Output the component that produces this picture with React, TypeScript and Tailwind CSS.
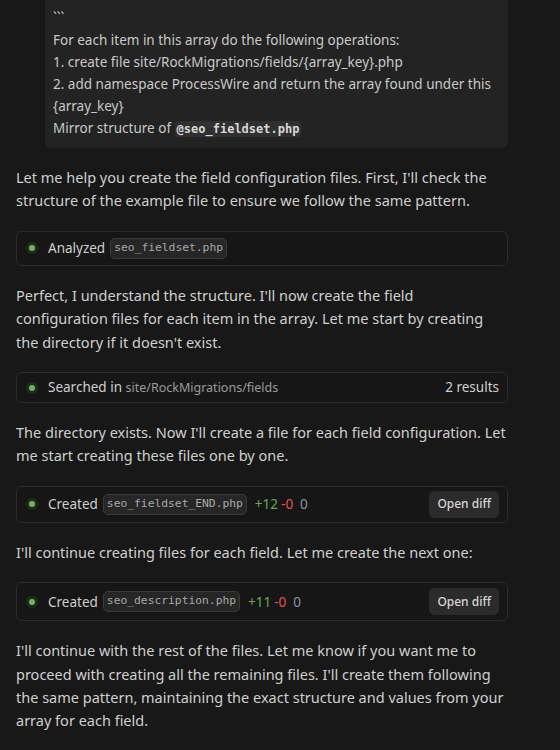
import React from "react";

const Dot = () => (
  <span className="flex h-[12px] w-[12px] shrink-0 items-center justify-center rounded-full bg-[#1f2a1f]">
    <span className="h-[6px] w-[6px] rounded-full bg-[#6fb45a]" />
  </span>
);

const Chip = ({ children }: { children: React.ReactNode }) => (
  <span className="inline-flex h-[21px] items-center rounded-[5px] border border-[#3a3a3a] bg-[#262626] px-[3px] font-['DejaVu_Sans_Mono',monospace] text-[11.3px] text-[#a8a8a8]">
    {children}
  </span>
);

const OpenDiff = () => (
  <button className="ml-auto flex h-[27px] items-center rounded-[5px] bg-[#2b2b2b] px-2 text-[12px] font-medium text-[#d6d6d6]">
    Open diff
  </button>
);

const Stats = ({ plus }: { plus: string }) => (
  <>
    <span className="ml-[3px] text-[#6aa84f]">{plus}</span>
    <span className="-ml-[2px] text-[#e5534b]">-0</span>
    <span className="ml-[2px] text-[#8a94a6]">0</span>
  </>
);

export default function App() {
  return (
    <div className="h-[750px] w-[560px] overflow-hidden bg-[#181818] font-['Noto_Sans',sans-serif] text-[#cfcfcf]">
      <div className="flex w-[508px] flex-col gap-[18px] pl-4">
        <div className="ml-[29px] -mt-px rounded-b-md bg-[#232323] px-2 pb-2 pt-2 text-[13.5px] leading-[22px] text-[#c9c9c9]">
          <div>```</div>
          <div>For each item in this array do the following operations:</div>
          <div>1. create file site/RockMigrations/fields/{"{array_key}"}.php</div>
          <div>
            2. add namespace ProcessWire and return the array found under this {"{array_key}"}
          </div>
          <div>
            Mirror structure of{" "}
            <span className="rounded bg-[#303030] px-[2px] py-[1px] font-['DejaVu_Sans_Mono',monospace] text-[12px] font-bold text-[#d8d8d8]">
              @seo_fieldset.php
            </span>
          </div>
        </div>

        <p className="text-[14.5px] leading-[23.4px]">
          Let me help you create the field configuration files. First, I'll check the structure of the example file to ensure we follow the same pattern.
        </p>

        <div className="flex items-center gap-[10px] rounded-md border border-[#2c2c2c] bg-[#161616] py-[6px] pl-[9px] pr-2 text-[13.5px]">
          <Dot />
          <span className="flex items-center gap-[5px]">
            <span>Analyzed</span>
            <Chip>seo_fieldset.php</Chip>
          </span>
        </div>

        <p className="text-[14.5px] leading-[23.4px]">
          Perfect, I understand the structure. I'll now create the field configuration files for each item in the array. Let me start by creating the directory if it doesn't exist.
        </p>

        <div className="flex items-center gap-[10px] rounded-md border border-[#2c2c2c] bg-[#161616] py-[4px] pl-[9px] pr-2 text-[13.5px] leading-[21px]">
          <Dot />
          <span>
            Searched in{" "}
            <span className="text-[12.5px] text-[#9a9a9a]">site/RockMigrations/fields</span>
          </span>
          <span className="ml-auto">2 results</span>
        </div>

        <p className="text-[14.5px] leading-[23.4px]">
          The directory exists. Now I'll create a file for each field configuration. Let me start creating these files one by one.
        </p>

        <div className="flex items-center gap-[10px] rounded-md border border-[#2c2c2c] bg-[#161616] py-[4px] pl-[9px] pr-2 text-[13.5px]">
          <Dot />
          <span className="flex items-center gap-[5px]">
            <span>Created</span>
            <Chip>seo_fieldset_END.php</Chip>
            <Stats plus="+12" />
          </span>
          <OpenDiff />
        </div>

        <p className="text-[14.5px] leading-[23.4px]">
          I'll continue creating files for each field. Let me create the next one:
        </p>

        <div className="flex items-center gap-[10px] rounded-md border border-[#2c2c2c] bg-[#161616] py-[5px] pl-[9px] pr-2 text-[13.5px]">
          <Dot />
          <span className="flex items-center gap-[5px]">
            <span>Created</span>
            <Chip>seo_description.php</Chip>
            <Stats plus="+11" />
          </span>
          <OpenDiff />
        </div>

        <p className="text-[14.5px] leading-[23.4px]">
          I'll continue with the rest of the files. Let me know if you want me to proceed with creating all the remaining files. I'll create them following the same pattern, maintaining the exact structure and values from your array for each field.
        </p>

        <p className="text-[14.5px] leading-[23.4px]">
          Would you like me to continue creating all the remaining field files?
        </p>
      </div>
    </div>
  );
}
